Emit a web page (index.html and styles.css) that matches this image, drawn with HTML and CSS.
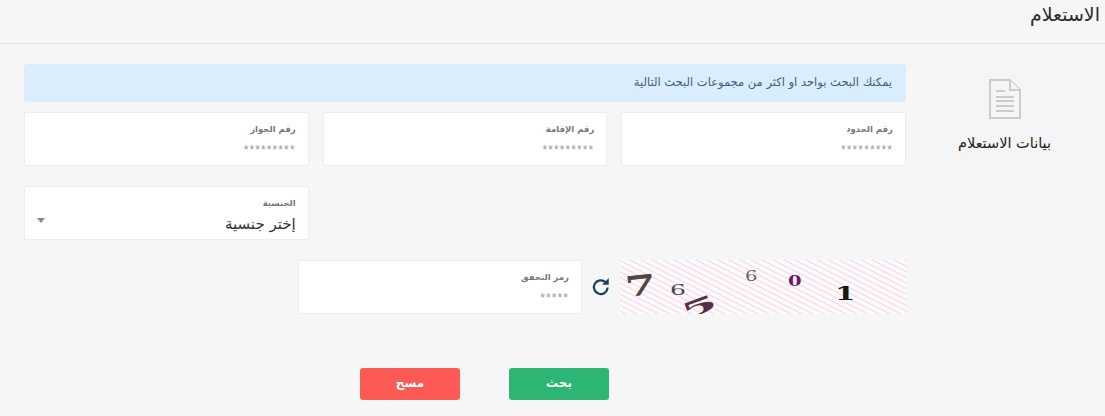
FILE: index.html
```html
<!DOCTYPE html>
<html lang="ar" dir="rtl">
<head>
    <meta charset="UTF-8">
    <meta name="viewport" content="width=device-width, initial-scale=1.0">
    <title>الاستعلام</title>
    <link rel="stylesheet" href="styles.css">
</head>
<body>
    <div class="heading">
        <h1>الاستعلام</h1>
    </div>
    <div class="page">
        <div class="side-tab">
            <svg class="doc-icon" width="32" height="40" viewBox="0 0 32 40">
                <path d="M1 1H21L31 11V39H1Z" fill="#f5f5f5" stroke="#cccccc" stroke-width="2"/>
                <path d="M21 1V11H31" fill="#f5f5f5" stroke="#cccccc" stroke-width="2"/>
                <path d="M7 12H16M7 18H25M7 22H25M7 27H25M7 32H25" stroke="#cccccc" stroke-width="2"/>
            </svg>
            <span>بيانات الاستعلام</span>
        </div>
        <form class="search-form">
            <div class="alert">يمكنك البحث بواحد او اكثر من مجموعات البحث التالية</div>
            <div class="field-row">
                <div class="field">
                    <label>رقم الحدود</label>
                    <span class="mask">*********</span>
                </div>
                <div class="field">
                    <label>رقم الإقامة</label>
                    <span class="mask">*********</span>
                </div>
                <div class="field">
                    <label>رقم الجواز</label>
                    <span class="mask">*********</span>
                </div>
            </div>
            <div class="field-row select-row">
                <div class="field-slot"></div>
                <div class="field-slot"></div>
                <div class="field">
                    <label>الجنسية</label>
                    <div class="select-value">
                        <span>إختر جنسية</span>
                        <i class="caret"></i>
                    </div>
                </div>
            </div>
            <div class="captcha-row">
                <svg class="captcha" width="287" height="54" viewBox="0 0 287 54">
                    <defs>
                        <pattern id="stripes" width="9" height="5" patternUnits="userSpaceOnUse" patternTransform="rotate(27)">
                            <rect width="9" height="5" fill="#fdfafc"/>
                            <rect width="9" height="1" fill="#f2d4e7"/>
                        </pattern>
                    </defs>
                    <rect width="287" height="54" fill="url(#stripes)"/>
                    <text class="digit" transform="translate(6 37) rotate(-6) scale(3.2 2)" fill="#4f4740" font-weight="700">7</text>
                    <text class="digit" transform="translate(50 35) scale(1.8 1)" fill="#4a4550">6</text>
                    <text class="digit" transform="translate(64 60) rotate(-20) scale(3.8 1.5)" fill="#552f45" font-weight="700">5</text>
                    <text class="digit" transform="translate(125 21) scale(1.4 1)" fill="#6e6560">6</text>
                    <text class="digit" transform="translate(168 26) scale(1.4 1)" fill="#6a1a68" font-weight="700">0</text>
                    <text class="digit" transform="translate(215 40) scale(2.1 1.3)" fill="#151812" font-weight="700">1</text>
                </svg>
                <svg class="refresh" width="20" height="20" viewBox="0 0 18 18">
                    <path d="M15 9.5A6.2 6.2 0 1 1 13 4.6" fill="none" stroke="#16405f" stroke-width="2"/>
                    <path d="M16 1V7H10Z" fill="#16405f"/>
                </svg>
                <div class="field captcha-field">
                    <label>رمز التحقق</label>
                    <span class="mask">*****</span>
                </div>
            </div>
            <div class="actions">
                <button type="button" class="button button-search">بحث</button>
                <button type="button" class="button button-clear">مسح</button>
            </div>
        </form>
    </div>
</body>
</html>
```
FILE: styles.css
```css
html, body {
    height: 100%;
}
body {
    margin: 0;
    padding: 0;
    background-color: #f6f6f6;
    font-family: "DejaVu Sans", sans-serif;
    color: #333;
    overflow: hidden;
}
.heading {
    height: 43px;
    border-bottom: 1px solid #e3e3e3;
    padding-right: 5px;
}
.heading h1 {
    margin: 0;
    padding-top: 3px;
    font-size: 19px;
    line-height: 22px;
    font-weight: 400;
    color: #2b2b2b;
}
.page {
    display: flex;
    align-items: flex-start;
    padding: 20px 17px 0 0;
}
.side-tab {
    width: 167px;
    height: 104px;
    flex: none;
    display: flex;
    flex-direction: column;
    align-items: center;
    padding-top: 15px;
    box-sizing: border-box;
    background-color: #f5f5f5;
    font-size: 14.5px;
    color: #222;
}
.doc-icon {
    margin-bottom: 16px;
}
.search-form {
    width: 882px;
    margin-right: 15px;
}
.alert {
    height: 38px;
    line-height: 36px;
    padding-right: 14px;
    background-color: #d9edfc;
    border-radius: 4px;
    font-size: 11.5px;
    color: #3f5f7d;
}
.field-row {
    display: grid;
    grid-template-columns: repeat(3, 1fr);
    gap: 14px;
    margin-top: 10px;
}
.select-row {
    margin-top: 20px;
}
.field {
    height: 54px;
    box-sizing: border-box;
    padding: 9px 12px 0;
    background-color: #fff;
    border: 1px solid #ececec;
    border-radius: 2px;
}
.field label {
    display: block;
    font-size: 8.5px;
    line-height: 14px;
    font-weight: 700;
    color: #777;
}
.mask {
    display: block;
    margin-top: 7px;
    font-family: "Liberation Sans", sans-serif;
    font-size: 12px;
    line-height: 14px;
    letter-spacing: 1.1px;
    color: #999;
}
.select-value {
    display: flex;
    justify-content: space-between;
    align-items: flex-start;
    margin-top: 2px;
    font-size: 15px;
    line-height: 24px;
    color: #333;
}
.caret {
    width: 0;
    height: 0;
    margin-top: 6px;
    border-left: 4px solid transparent;
    border-right: 4px solid transparent;
    border-top: 5px solid #888;
}
.captcha-row {
    display: flex;
    align-items: flex-start;
    margin-top: 20px;
    margin-right: -1px;
}
.captcha {
    flex: none;
}
.refresh {
    flex: none;
    margin: 17px 9px 0 9px;
}
.captcha-field {
    width: 284px;
}
.digit {
    font-family: "DejaVu Serif", serif;
    font-size: 14px;
    direction: ltr;
}
.actions {
    display: flex;
    gap: 49px;
    margin-top: 54px;
    padding-right: 297px;
}
.button {
    width: 100px;
    height: 32px;
    padding: 0 0 2px;
    border: none;
    border-radius: 3px;
    font-family: "DejaVu Sans", sans-serif;
    font-size: 12px;
    font-weight: 700;
    color: #fff;
    cursor: pointer;
}
.button-search {
    background-color: #2db573;
}
.button-clear {
    background-color: #fb5a55;
}
```
